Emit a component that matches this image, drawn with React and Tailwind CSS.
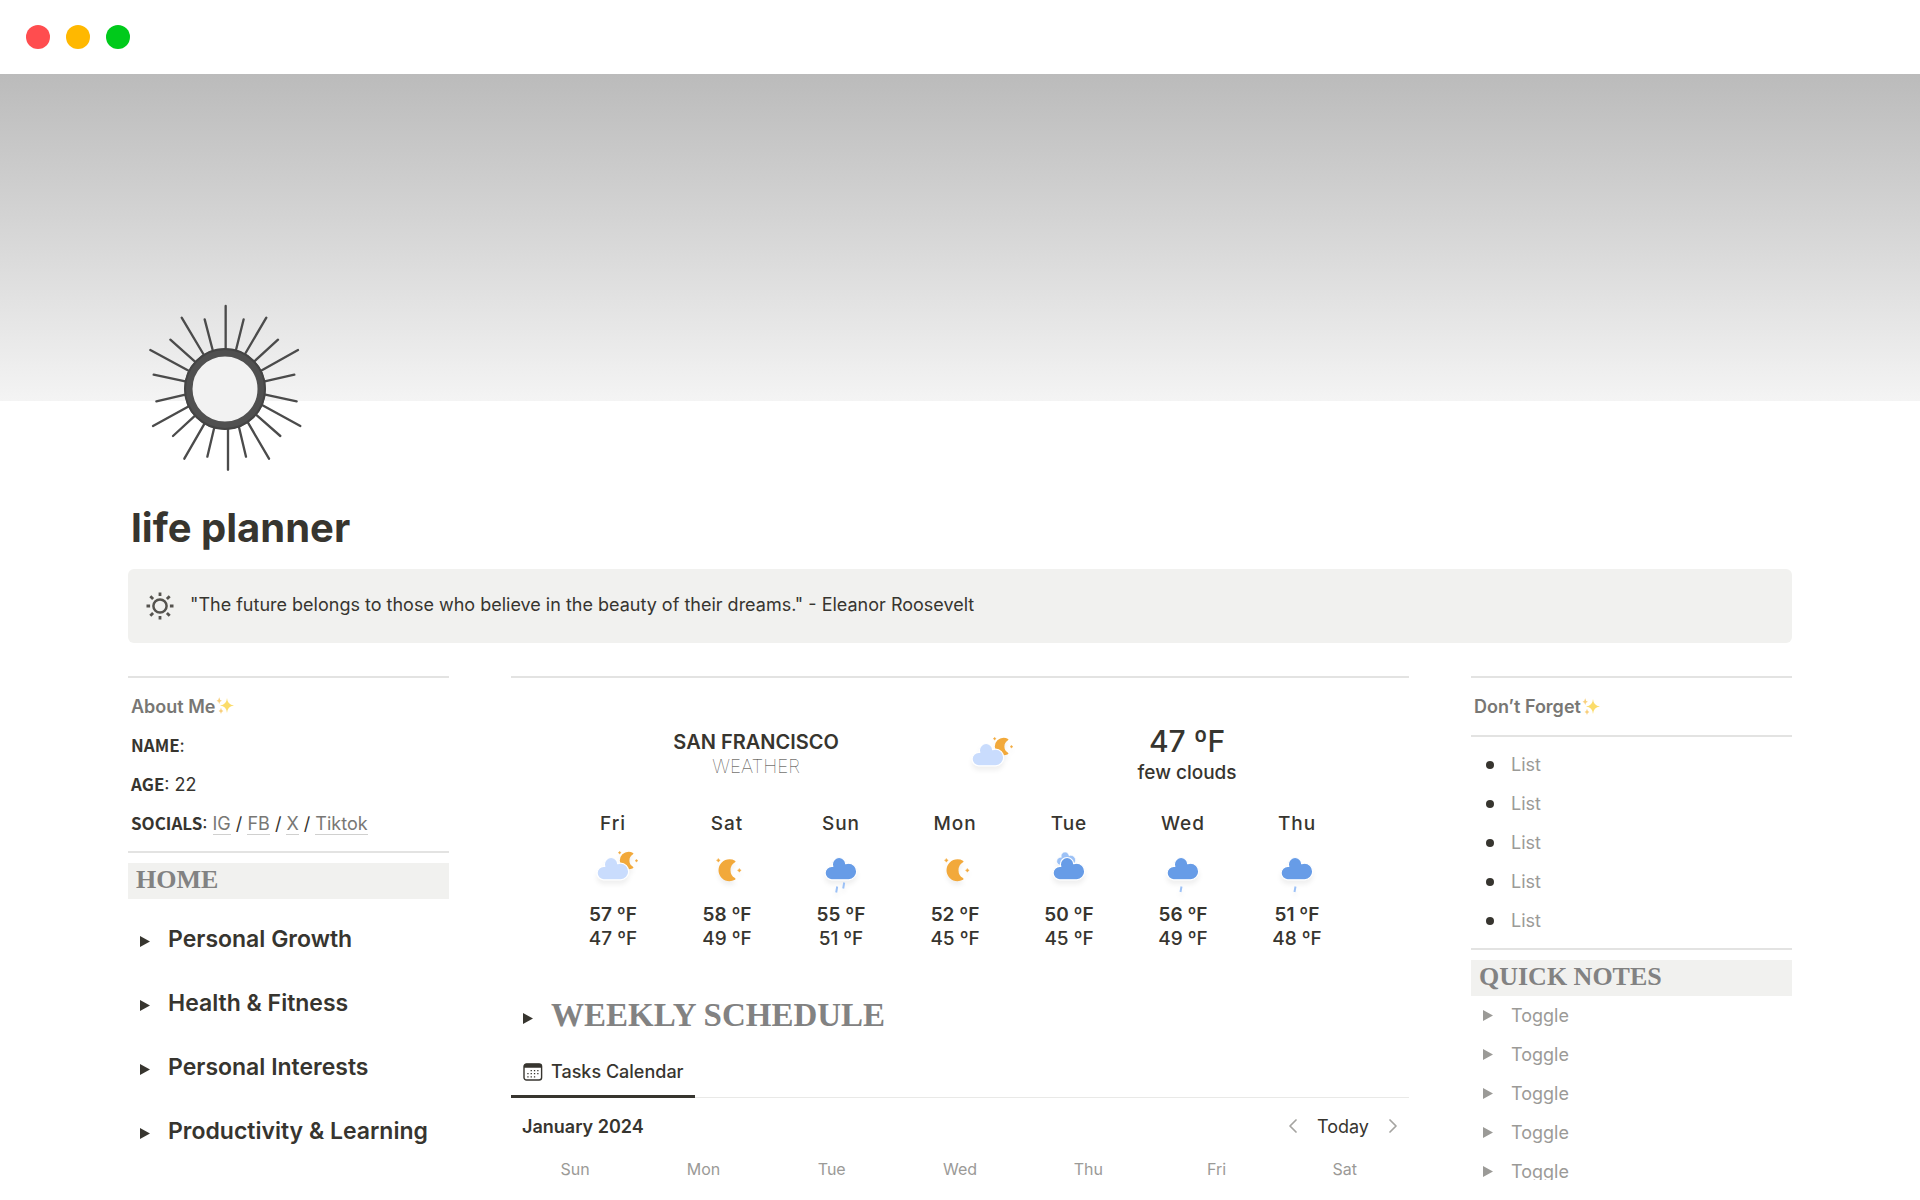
import React from 'react';
import { ChevronLeft, ChevronRight } from 'lucide-react';

const goals = ['Personal Growth', 'Health & Fitness', 'Personal Interests', 'Productivity & Learning'];

const forecast = [
  { day: 'Fri', icon: 'fewClouds', high: 57, low: 47 },
  { day: 'Sat', icon: 'clear', high: 58, low: 49 },
  { day: 'Sun', icon: 'rain', high: 55, low: 51 },
  { day: 'Mon', icon: 'clear', high: 52, low: 45 },
  { day: 'Tue', icon: 'cloudy', high: 50, low: 45 },
  { day: 'Wed', icon: 'drizzle', high: 56, low: 49 },
  { day: 'Thu', icon: 'drizzle', high: 51, low: 48 },
];

const weekdays = ['Sun', 'Mon', 'Tue', 'Wed', 'Thu', 'Fri', 'Sat'];

// x1, y1 is the tip of the ray, x2, y2 is where it meets the ring
const rays = [
  [317, 48, 317, 176],
  [371, 88, 348, 180],
  [439, 83, 375, 192],
  [474, 149, 403, 214],
  [534, 180, 423, 242],
  [523, 254, 434, 274],
  [530, 334, 436, 314],
  [541, 408, 426, 345],
  [481, 438, 408, 374],
  [447, 506, 384, 398],
  [378, 500, 357, 412],
  [324, 539, 324, 418],
  [262, 500, 283, 412],
  [193, 506, 254, 400],
  [159, 438, 226, 376],
  [99, 408, 208, 348],
  [109, 334, 196, 314],
  [101, 254, 196, 274],
  [91, 180, 206, 242],
  [151, 149, 225, 215],
  [185, 83, 250, 192],
  [254, 88, 278, 180],
];

function SunIcon() {
  return (
    <svg viewBox="78 36 480 516" className="w-40 h-[172px]" aria-hidden="true">
      <g stroke="#4b4b4b" strokeWidth="7" strokeLinecap="round">
        {rays.map(([x1, y1, x2, y2]) => (
          <line key={`${x1}-${y1}`} x1={x1} y1={y1} x2={x2} y2={y2} />
        ))}
      </g>
      <circle cx="315" cy="297" r="110" fill="#f2f2f2" stroke="#505050" strokeWidth="25" />
      <circle cx="315" cy="297" r="120" fill="none" stroke="#444444" strokeWidth="6" />
    </svg>
  );
}

function SmallSun() {
  return (
    <svg viewBox="0 0 28 28" className="w-7 h-7" fill="none" stroke="#55534e" aria-hidden="true">
      <circle cx="14" cy="14" r="6.6" strokeWidth="2.5" />
      <g strokeWidth="2.8">
        <path d="M14 0.5v3.6M14 23.900v3.600M0.5 14h3.600M23.900 14h3.600" />
        <path d="M4.300 4.300l2.800 2.800M20.900 20.900l2.800 2.800M4.300 23.700l2.800-2.800M20.900 7.100l2.800-2.800" />
      </g>
    </svg>
  );
}

function Sparkles() {
  return (
    <svg viewBox="0 0 18 18" className="ml-px w-[18px] h-[18px]" aria-hidden="true">
      <path d="M11 1q.4 6.600 7 7.500q-6.600.9-7 7.500q-.4-6.600-7-7.500q6.600-.9 7-7.500z" fill="#fbdc6a" />
      <path d="M3.200 0.300q.3 2.900 2.700 3.400q-2.400.5-2.700 3.400q-.3-2.900-2.700-3.400q2.400-.5 2.700-3.400z" fill="#f8cf7c" />
      <path d="M5 10.700q.3 2.700 2.400 3.200q-2.100.5-2.400 3.200q-.3-2.700-2.400-3.200q2.100-.5 2.400-3.200z" fill="#f8cf7c" />
    </svg>
  );
}

function Triangle({ className }) {
  return (
    <svg viewBox="0 0 10 11" className={`w-[10px] h-[11px] shrink-0 ${className}`} fill="currentColor" aria-hidden="true">
      <path d="M0 0l10 5.500l-10 5.500z" />
    </svg>
  );
}

function CalendarIcon() {
  return (
    <svg viewBox="0 0 20 18" className="w-5 h-[18px]" fill="none" aria-hidden="true">
      <rect x="1" y="1" width="17.600" height="16" rx="2.500" stroke="#37352f" strokeWidth="1.400" />
      <path d="M1 4.800v-1.600a2.500 2.500 0 0 1 2.500-2.500h12.600a2.500 2.500 0 0 1 2.500 2.500v1.600z" fill="#37352f" />
      <g stroke="#37352f" strokeWidth="1.300" strokeDasharray="1.300 2">
        <path d="M7.600 7.600h8" />
        <path d="M4.300 10.700h11.200" />
        <path d="M4.300 13.800h8" />
      </g>
    </svg>
  );
}

const CLOUD =
  'M47.7,35.4c0-4.6-3.7-8.2-8.2-8.2c-1,0-1.9,0.2-2.8,0.5c-0.3-3.4-3.1-6.2-6.6-6.2c-3.7,0-6.7,3-6.7,6.7c0,0.8,0.2,1.6,0.4,2.3c-0.3-0.1-0.7-0.1-1-0.1c-3.7,0-6.7,3-6.7,6.7c0,3.6,2.9,6.6,6.5,6.7l17.2,0C44.2,43.3,47.7,39.8,47.7,35.4z';
const MOON =
  'M14.5,13.2c0-3.7,2-6.9,5-8.7c-1.5-0.9-3.2-1.3-5-1.3c-5.5,0-10,4.5-10,10s4.5,10,10,10c1.800,0,3.500-0.500,5-1.300C16.500,20.200,14.500,16.900,14.500,13.200z';
const STAR = '3.3,1.5 4,2.7 5.2,3.3 4,4 3.3,5.2 2.7,4 1.5,3.3 2.7,2.7';

function Moon({ transform }) {
  return (
    <g transform={transform} fill="#f2a93b" stroke="#f2a93b" strokeLinejoin="round">
      <path d={MOON} strokeWidth="2" />
      <polygon points={STAR} strokeWidth="0.500" />
      <polygon points={STAR} strokeWidth="0.500" transform="translate(21,10)" />
    </g>
  );
}

function Cloud({ fill, transform }) {
  return <path d={CLOUD} fill={fill} stroke="#ffffff" strokeWidth="1.200" strokeLinejoin="round" transform={transform} />;
}

function WeatherIcon({ name }) {
  return (
    <svg viewBox="0 0 64 64" className="w-16 h-16 drop-shadow-[0_4px_2px_rgba(0,0,0,0.06)]" role="img" aria-label={name}>
      {name === 'clear' && <Moon transform="translate(20,20)" />}
      {name === 'fewClouds' && (
        <>
          <Moon transform="translate(36,13) scale(0.8)" />
          <Cloud fill="#c9dcfd" transform="translate(0,-1)" />
        </>
      )}
      {name === 'cloudy' && <Cloud fill="#9cc1f6" transform="translate(10,2) scale(0.6)" />}
      {(name === 'cloudy' || name === 'rain' || name === 'drizzle') && (
        <Cloud fill="#679ce7" transform="translate(0,-1)" />
      )}
      <g stroke="#9cc1f6" strokeWidth="2">
        {name === 'rain' && <path d="M28.200 49.500l-1 6M35.200 45.500l-1 6" />}
        {name === 'drizzle' && <path d="M30.500 49.500l-1 5.500" />}
      </g>
    </svg>
  );
}

function Divider() {
  return <hr className="border-0 h-[2px] bg-[#e3e3e2]" />;
}

function SectionTitle({ children }) {
  return (
    <h2 className="mt-2.5 h-9 pl-2 bg-[#f1f1ef] font-['Liberation_Serif',serif] font-bold text-[26px] leading-[34px] text-[#828282]">
      {children}
    </h2>
  );
}

function InfoLabel({ children }) {
  return <b className="font-['Noto_Sans_CJK_SC',sans-serif] font-bold text-[17px]">{children}</b>;
}

function SocialLink({ children }) {
  return (
    <a href="#" className="text-[#787774] border-b border-[#d0d0cf]">
      {children}
    </a>
  );
}

function LeftColumn() {
  return (
    <div>
      <Divider />
      <div className="pt-[9px] pb-[9px] pl-[3px]">
        <h3 className="h-[38px] flex items-center font-semibold text-[#787774]">
          About Me
          <Sparkles />
        </h3>
        <p className="leading-[39px] h-[39px]"><InfoLabel>NAME</InfoLabel>:</p>
        <p className="leading-[39px] h-[39px]"><InfoLabel>AGE</InfoLabel>: 22</p>
        <p className="leading-[39px] h-[39px]">
          <InfoLabel>SOCIALS</InfoLabel>: <SocialLink>IG</SocialLink> / <SocialLink>FB</SocialLink> /{' '}
          <SocialLink>X</SocialLink> / <SocialLink>Tiktok</SocialLink>
        </p>
      </div>
      <Divider />
      <SectionTitle>HOME</SectionTitle>
      <div className="pt-2">
        {goals.map((goal) => (
          <button key={goal} type="button" className="w-full h-16 pl-3 flex items-center text-left whitespace-nowrap text-[23px] font-semibold">
            <Triangle className="mt-1 mr-[18px]" />
            {goal}
          </button>
        ))}
      </div>
    </div>
  );
}

function Weather() {
  return (
    <section className="pt-11 pl-[45px] pr-[55px]">
      <div className="h-[66px] flex justify-evenly items-center text-center">
        <div>
          <p className="text-[20px] leading-6 font-semibold">SAN FRANCISCO</p>
          <p className="text-[19px] leading-[26px] font-thin">WEATHER</p>
        </div>
        <WeatherIcon name="fewClouds" />
        <div>
          <p className="text-[30px] leading-9 font-medium">47 ºF</p>
          <p className="text-[19px] leading-7 font-medium">few clouds</p>
        </div>
      </div>
      <div className="mt-[23px] grid grid-cols-7 text-[19px] text-center font-medium">
        {forecast.map(({ day, icon, high, low }) => (
          <div key={day} className="flex flex-col items-center">
            <p className="leading-[26px] tracking-wider">{day}</p>
            <WeatherIcon name={icon} />
            <p className="mt-0.5 leading-6 font-semibold">{high} ºF</p>
            <p className="leading-6">{low} ºF</p>
          </div>
        ))}
      </div>
    </section>
  );
}

function MiddleColumn() {
  return (
    <div>
      <Divider />
      <Weather />
      <button type="button" className="mt-[45px] h-10 pl-3 flex items-center font-['Liberation_Serif',serif] font-bold text-[33px]">
        <Triangle className="mt-1 mr-[18px]" />
        <span className="text-[#828282]">WEEKLY SCHEDULE</span>
      </button>
      <div className="mt-3 h-[50px] flex border-b border-[#e9e9e7]">
        <button type="button" className="h-[50px] pl-3 pr-[11px] flex items-center gap-2 border-b-3 border-[#37352f] font-medium">
          <CalendarIcon />
          Tasks Calendar
        </button>
      </div>
      <div className="h-[56px] pl-[11px] pr-1 flex items-center">
        <h3 className="font-semibold">January 2024</h3>
        <div className="ml-auto flex items-center">
          <button type="button" aria-label="Previous month" className="text-[#a5a4a1]">
            <ChevronLeft size={24} strokeWidth={1.75} />
          </button>
          <button type="button" className="px-3">Today</button>
          <button type="button" aria-label="Next month" className="text-[#a5a4a1]">
            <ChevronRight size={24} strokeWidth={1.75} />
          </button>
        </div>
      </div>
      <table className="w-full table-fixed text-base text-[#9b9a97]">
        <thead>
          <tr>
            {weekdays.map((day) => (
              <th key={day} scope="col" className="h-[30px] p-0 font-normal">{day}</th>
            ))}
          </tr>
        </thead>
      </table>
    </div>
  );
}

function RightColumn() {
  return (
    <div>
      <Divider />
      <h3 className="h-[57px] pl-[3px] flex items-center font-semibold text-[#787774]">
        Don’t Forget
        <Sparkles />
      </h3>
      <Divider />
      <ul className="py-2">
        {[1, 2, 3, 4, 5].map((n) => (
          <li key={n} className="h-[39px] pl-[15px] flex items-center text-[#9b9a97]">
            <span className="w-2 h-2 mr-[17px] rounded-full bg-[#37352f]" />
            List
          </li>
        ))}
      </ul>
      <Divider />
      <SectionTitle>QUICK NOTES</SectionTitle>
      <div>
        {[1, 2, 3, 4, 5].map((n) => (
          <button key={n} type="button" className="w-full h-[39px] pl-3 flex items-center text-[#9b9a97]">
            <Triangle className="mr-[18px]" />
            Toggle
          </button>
        ))}
      </div>
    </div>
  );
}

function App() {
  return (
    <div className="h-screen pb-5 flex flex-col overflow-hidden bg-white font-['Inter',sans-serif] text-[18px] text-[#37352f]">
      <header className="h-[74px] shrink-0 pl-[26px] flex items-center gap-4">
        <span className="w-6 h-6 rounded-full bg-[#ff4d4f]" />
        <span className="w-6 h-6 rounded-full bg-[#ffb800]" />
        <span className="w-6 h-6 rounded-full bg-[#00ca1b]" />
      </header>

      <main className="flex-1 min-h-0 overflow-hidden">
        <div className="h-[327px] bg-linear-to-b from-[#bbbbbb] to-[#f4f4f4]" />
        <div className="px-32">
          <div className="relative -mt-[99px] ml-[18px]">
            <SunIcon />
          </div>
          <h1 className="mt-7 ml-[3px] text-[40px] leading-[52px] font-bold">life planner</h1>

          <div className="mt-[15px] h-[74px] pl-[18px] flex items-center gap-4 rounded-md bg-[#f1f1ef]">
            <SmallSun />
            <p className="pb-1">
              "The future belongs to those who believe in the beauty of their dreams." - Eleanor Roosevelt
            </p>
          </div>

          <div className="mt-[33px] grid grid-cols-[321fr_898fr_321fr] gap-[62px]">
            <LeftColumn />
            <MiddleColumn />
            <RightColumn />
          </div>
        </div>
      </main>
    </div>
  );
}

export default App;
